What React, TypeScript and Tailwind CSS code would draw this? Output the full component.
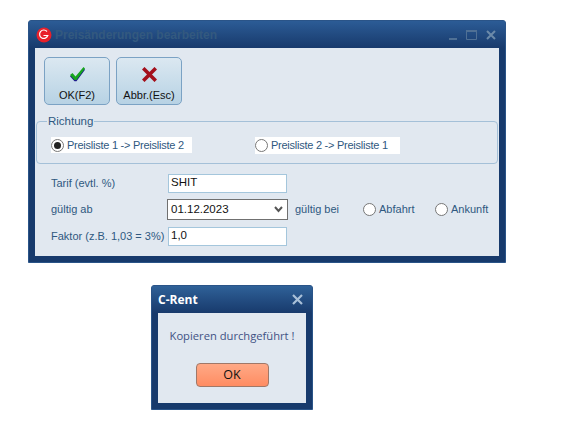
const ui = { fontFamily: '"Liberation Sans", Arial, sans-serif' };

const Radio = ({ checked = false }: { checked?: boolean }) => (
  <span className="flex h-[13px] w-[13px] shrink-0 items-center justify-center rounded-full border border-[#777] bg-white">
    {checked && <span className="h-[7px] w-[7px] rounded-full bg-[#222]" />}
  </span>
);

const Check = () => (
  <svg width="17" height="16" viewBox="0 0 17 16">
    <path d="M1 9l2.500-2 3 3.500L14.500 1 16 2.500 7.500 14H5.500z" fill="#1c1c8a" transform="translate(0 1.200)" />
    <path d="M1 9l2.500-2 3 3.500L14.500 1 16 2.500 7.500 14H5.500z" fill="#16a51e" />
  </svg>
);

const Cross = () => (
  <svg width="15" height="15" viewBox="0 0 15 15">
    <path d="M2.500 2.500l10 10M12.500 2.500l-10 10" stroke="#a3101c" strokeWidth="3.600" strokeLinecap="square" />
  </svg>
);

const ToolButton = ({ label, icon }: { label: string; icon: React.ReactNode }) => (
  <button className="flex h-[48px] w-[66px] flex-col items-center rounded-[5px] border border-[#7ba2c4] bg-gradient-to-b from-[#dbe8f1] to-[#b7d2e4] pt-[7px] text-[11px] text-[#111]">
    <span className="flex h-[18px] items-center">{icon}</span>
    <span className="mt-[5px] whitespace-nowrap leading-[14px]">{label}</span>
  </button>
);

const Field = ({ value }: { value: string }) => (
  <div className="flex h-[19px] w-[119px] items-center border border-[#a4c6dc] bg-white pl-[2px] text-[11.500px] text-[#111]">{value}</div>
);

const Label = ({ children }: { children: React.ReactNode }) => (
  <span className="w-[117px] shrink-0 whitespace-nowrap text-[11px] text-[#2f5880]">{children}</span>
);

const App = () => (
  <div className="relative h-[422px] w-[562px] overflow-hidden bg-white" style={ui}>
    {/* main window */}
    <div className="absolute left-[28px] top-[20px] flex h-[243px] w-[478px] flex-col rounded-t-[3px] border border-[#2a5488] bg-[#173a6c] px-[6px] pb-[6px]">
      <div className="-mx-[6px] flex h-[27px] items-center bg-gradient-to-b from-[#2c5c96] to-[#183a6c] pl-[7px] pr-[9px]">
        <svg width="16" height="16" viewBox="0 0 16 16" className="shrink-0">
          <circle cx="8" cy="8" r="7.500" fill="#e8202a" />
          <path d="M11 4.500A4.200 4.200 0 1 0 11.800 8.500H7.500" fill="none" stroke="#fff" strokeWidth="1.200" />
        </svg>
        <span className="ml-[3px] whitespace-nowrap text-[12px] font-bold text-[#33597f]">Preisänderungen bearbeiten</span>
        <div className="ml-auto flex items-center gap-[9px]">
          <svg width="8" height="10" viewBox="0 0 8 10"><path d="M0 8h8v2H0z" fill="#4f7095" /></svg>
          <svg width="11" height="10" viewBox="0 0 11 10"><path d="M.5 1.500h10v8H.5z" fill="none" stroke="#4f7095" /><path d="M0 0h11v2H0z" fill="#4f7095" /></svg>
          <svg width="10" height="10" viewBox="0 0 10 10"><path d="M1 1l8 8M9 1L1 9" stroke="#6c8aa9" strokeWidth="2" /></svg>
        </div>
      </div>
      <div className="flex-1 bg-[#e1e8f0]">
        <div className="ml-[9px] mt-[9px] flex gap-[6px]">
          <ToolButton label="OK(F2)" icon={<Check />} />
          <ToolButton label="Abbr.(Esc)" icon={<Cross />} />
        </div>
        <div className="relative ml-[1px] mt-[16px] h-[43px] w-[462px] rounded-[4px] border border-[#a4c0d8]">
          <span className="absolute -top-[9px] left-[10px] bg-[#e1e8f0] px-[1px] text-[11.500px] leading-[16px] text-[#2f5880]">Richtung</span>
          <div className="ml-[14px] mt-[15px] flex">
            <div className="flex h-[16px] w-[141px] items-center gap-[3px] whitespace-nowrap bg-white text-[11px] tracking-[-0.25px] text-[#2f5880]">
              <Radio checked />
              <span>Preisliste 1 -&gt; Preisliste 2</span>
            </div>
            <div className="ml-[63px] flex h-[17px] w-[145px] items-center gap-[3px] whitespace-nowrap bg-white text-[11px] tracking-[-0.25px] text-[#2f5880]">
              <Radio />
              <span>Preisliste 2 -&gt; Preisliste 1</span>
            </div>
          </div>
        </div>
        <div className="ml-[16px] mt-[9px] flex flex-col">
          <div className="flex h-[20px] items-center">
            <Label>Tarif (evtl. %)</Label>
            <Field value="SHIT" />
          </div>
          <div className="mt-[6px] flex h-[21px] items-center">
            <Label>gültig ab</Label>
            <div className="-ml-[1px] flex h-[21px] w-[121px] items-center justify-between border border-[#707070] bg-white pl-[3px] pr-[4px] text-[11.500px] text-[#111]">
              01.12.2023
              <svg width="9" height="7" viewBox="0 0 9 7"><path d="M1 1l3.500 4L8 1" fill="none" stroke="#555" strokeWidth="2" /></svg>
            </div>
            <span className="ml-[7px] w-[68px] whitespace-nowrap text-[11px] text-[#2f5880]">gültig bei</span>
            <div className="flex w-[72px] items-center gap-[3px] text-[11px] text-[#2f5880]"><Radio /><span>Abfahrt</span></div>
            <div className="flex items-center gap-[3px] text-[11px] text-[#2f5880]"><Radio /><span>Ankunft</span></div>
          </div>
          <div className="mt-[6px] flex h-[20px] items-center">
            <Label>Faktor (z.B. 1,03 = 3%)</Label>
            <Field value="1,0" />
          </div>
        </div>
      </div>
    </div>

    {/* message box */}
    <div className="absolute left-[151px] top-[285px] flex h-[125px] w-[162px] flex-col rounded-t-[3px] border border-[#2a5488] bg-[#173a6c] px-[6px] pb-[6px]" style={{ fontFamily: '"Open Sans", sans-serif' }}>
      <div className="-mx-[6px] flex h-[27px] items-center justify-between bg-gradient-to-b from-[#2f6198] to-[#183a6c] pl-[6px] pr-[9px]">
        <span className="text-[12px] font-bold text-white">C-Rent</span>
        <svg width="11" height="11" viewBox="0 0 11 11"><path d="M1 1l9 9M10 1l-9 9" stroke="#a9c0d8" strokeWidth="2.200" /></svg>
      </div>
      <div className="flex flex-1 flex-col items-center bg-[#e1e8f0] pt-[14px]">
        <span className="whitespace-nowrap text-[11.200px] leading-[18px] text-[#3f5284]">Kopieren durchgeführt !</span>
        <button className="mt-[18px] h-[24px] w-[73px] rounded-[4px] border border-[#a07868] bg-gradient-to-b from-[#ffa986] to-[#ff8c62] text-[12.500px] text-[#111]">OK</button>
      </div>
    </div>
  </div>
);

export default App;
